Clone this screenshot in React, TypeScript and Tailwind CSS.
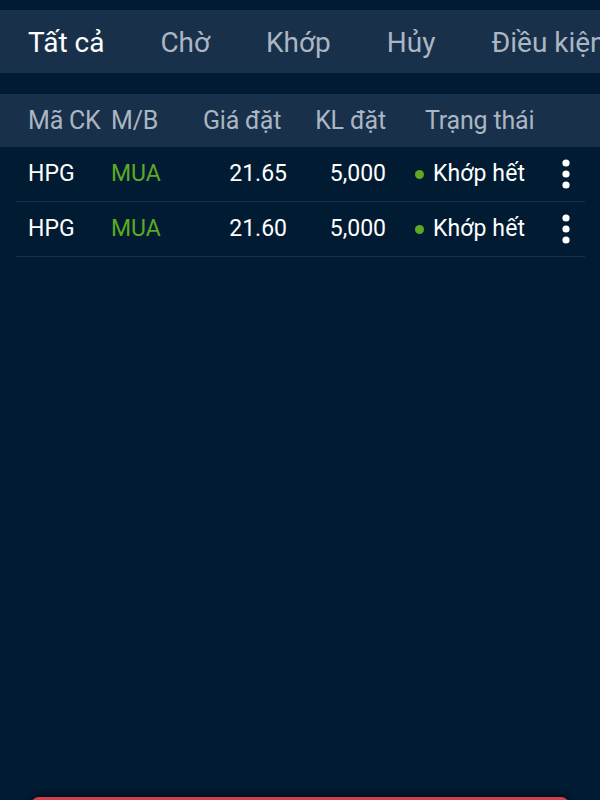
import React from 'react';

type Order = { code: string; side: string; price: string; qty: string; status: string };

const tabs = ['Tất cả', 'Chờ', 'Khớp', 'Hủy', 'Điều kiện'];

const orders: Order[] = [
  { code: 'HPG', side: 'MUA', price: '21.65', qty: '5,000', status: 'Khớp hết' },
  { code: 'HPG', side: 'MUA', price: '21.60', qty: '5,000', status: 'Khớp hết' },
];

const cols = 'grid grid-cols-[83px_92px_84px_99px_1fr] items-center';

function MoreIcon() {
  return (
    <svg width="10" height="30" viewBox="0 0 10 30" className="fill-white">
      <circle cx="5" cy="4" r="3.6" />
      <circle cx="5" cy="15" r="3.6" />
      <circle cx="5" cy="26" r="3.6" />
    </svg>
  );
}

function OrderRow({ order }: { order: Order }) {
  return (
    <div className={`${cols} h-[55px] border-b border-[#1c3149] pl-3 pr-[14px] text-[23px] text-white`}>
      <span>{order.code}</span>
      <span className="text-[#5ea823]">{order.side}</span>
      <span className="text-right">{order.price}</span>
      <span className="text-right">{order.qty}</span>
      <div className="flex items-center justify-between pl-[29px]">
        <span className="flex items-center gap-[9px]">
          <span className="h-[9px] w-[9px] rounded-full bg-[#5ea823]" />
          <span className="tracking-[0.1px]">{order.status}</span>
        </span>
        <MoreIcon />
      </div>
    </div>
  );
}

export default function App() {
  return (
    <div className="flex h-[800px] flex-col overflow-hidden bg-[#011b33] pt-[10px] font-['Roboto',sans-serif]">
      <div className="flex h-[63px] shrink-0 items-center gap-[56px] overflow-hidden whitespace-nowrap bg-[#19304a] px-7 pt-[3px] text-[28px]">
        {tabs.map((t, i) => (
          <span key={t} className={i === 0 ? 'text-white' : 'text-[#aab6c3]'}>
            {t}
          </span>
        ))}
      </div>

      <div className={`${cols} mt-[21px] h-[53px] shrink-0 bg-[#19304a] px-7 text-[25px] tracking-[-0.2px] text-[#aab6c3]`}>
        <span>Mã CK</span>
        <span>M/B</span>
        <span className="whitespace-nowrap">Giá đặt</span>
        <span className="text-right">KL đặt</span>
        <span className="whitespace-nowrap pl-[39px]">Trạng thái</span>
      </div>

      <div className="mx-4 mr-[15px] min-h-0 flex-1">
        {orders.map((o, i) => (
          <OrderRow key={i} order={o} />
        ))}
      </div>

      <div className="h-[3px] shrink-0 px-[31px]">
        <div className="h-[52px] w-full rounded-lg bg-[#d23e49] shadow-[0_-2px_6px_rgba(0,0,0,0.5)]" />
      </div>
    </div>
  );
}
